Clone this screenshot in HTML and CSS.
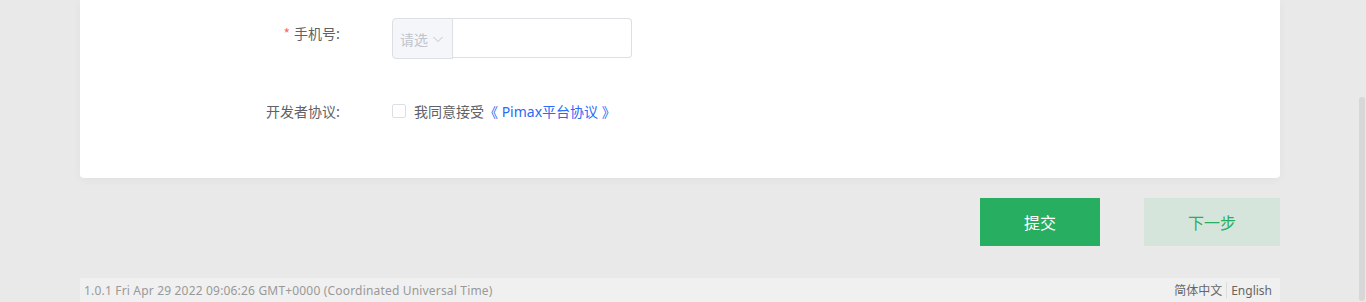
FILE: index.html
```html
<!DOCTYPE html>
<html lang="zh-CN">
<head>
<meta charset="utf-8">
<title>Pimax 开发者注册</title>
<link rel="stylesheet" href="styles.css">
</head>
<body>
<div class="page">
  <div class="card">
    <div class="form-row phone-row">
      <div class="label"><span class="req">*</span>手机号:</div>
      <div class="control">
        <div class="phone">
          <div class="prefix">请选<svg class="chev" viewBox="0 0 12 12" width="12" height="12"><path d="M1.5 4 L6 8.5 L10.5 4" fill="none" stroke="#c0c4cc" stroke-width="1"/></svg></div>
          <div class="phone-input"></div>
        </div>
      </div>
    </div>
    <div class="form-row agree-row">
      <div class="label">开发者协议:</div>
      <div class="control agree">
        <span class="checkbox"></span>
        <span class="agree-text">我同意接受</span><a class="link" href="#">《 Pimax平台协议 》</a>
      </div>
    </div>
  </div>
  <div class="actions">
    <button class="btn btn-primary">提交</button>
    <button class="btn btn-next">下一步</button>
  </div>
  <div class="footer">
    <span class="version">1.0.1 Fri Apr 29 2022 09:06:26 GMT+0000 (Coordinated Universal Time)</span>
    <span class="langs"><span class="lang">简体中文</span><span class="sep"></span><span class="lang">English</span></span>
  </div>
</div>
<div class="scrollbar"><div class="thumb"></div></div>
</body>
</html>
```
FILE: styles.css
```css
html, body {
  margin: 0;
  padding: 0;
  height: 302px;
  overflow: hidden;
}
body {
  background: #e9e9e9;
  font-family: "Noto Sans CJK SC", "Noto Sans", sans-serif;
  color: #606266;
  font-size: 14px;
}
.page {
  width: 1200px;
  padding-left: 80px;
}
.card {
  background: #fff;
  border-radius: 0 0 4px 4px;
  box-shadow: 0 2px 10px rgba(0,0,0,0.04);
  height: 178px;
  box-sizing: border-box;
  padding-top: 18px;
}
.form-row {
  display: flex;
  align-items: center;
}
.label {
  width: 260px;
  text-align: right;
  color: #606266;
  font-size: 14px;
  line-height: 20px;
}
.req {
  color: #f56c6c;
  margin-right: 4px;
}
.control {
  margin-left: 52px;
}
.phone-row {
  align-items: flex-start;
}
.phone-row .label {
  padding-top: 5px;
}
.phone {
  display: flex;
  align-items: flex-start;
}
.prefix {
  width: 61px;
  height: 41px;
  box-sizing: border-box;
  background: #f5f6fa;
  border: 1px solid #dcdfe6;
  border-radius: 4px 0 0 4px;
  color: #c0c4cc;
  display: flex;
  align-items: center;
  padding-left: 7px;
  gap: 4px;
}
.chev {
  display: block;
}
.phone-input {
  width: 179px;
  height: 40px;
  box-sizing: border-box;
  border: 1px solid #dcdfe6;
  border-left: none;
  border-radius: 0 4px 4px 0;
  background: #fff;
}
.agree-row {
  margin-top: 42px;
}
.agree {
  display: flex;
  align-items: center;
}
.checkbox {
  width: 14px;
  height: 14px;
  box-sizing: border-box;
  border: 1px solid #dcdfe6;
  border-radius: 2px;
  background: #fff;
  margin-right: 8px;
}
.agree-text {
  color: #606266;
}
.link {
  color: #2a6af6;
  text-decoration: none;
  font-family: "Noto Sans", "Noto Sans CJK SC", sans-serif;
}
.actions {
  display: flex;
  justify-content: flex-end;
  gap: 44px;
  margin-top: 20px;
}
.btn {
  height: 48px;
  border: none;
  border-radius: 0;
  font-family: "Noto Sans CJK SC", sans-serif;
  font-size: 16px;
  padding: 0;
}
.btn-primary {
  width: 120px;
  background: #27ae60;
  color: #fff;
}
.btn-next {
  width: 136px;
  background: #d6e5dc;
  color: #27ae60;
}
.footer {
  margin-top: 32px;
  height: 24px;
  background: #f0f0f0;
  display: flex;
  align-items: center;
  justify-content: space-between;
  padding: 0 8px 0 4px;
  font-size: 12px;
  font-family: "Noto Sans", "Noto Sans CJK SC", sans-serif;
}
.version {
  color: #999;
  letter-spacing: 0.18px;
}
.langs {
  display: flex;
  align-items: center;
  color: #666;
}
.sep {
  width: 1px;
  height: 16px;
  background: #dcdcdc;
  margin: 0 4px;
}
.scrollbar {
  position: absolute;
  top: 0;
  right: 0;
  width: 8px;
  height: 302px;
  background: #e9e9e9;
}
.thumb {
  position: absolute;
  top: 97px;
  left: 1px;
  width: 6px;
  height: 204px;
  border-radius: 3px;
  background: #d7d7d7;
}
```
